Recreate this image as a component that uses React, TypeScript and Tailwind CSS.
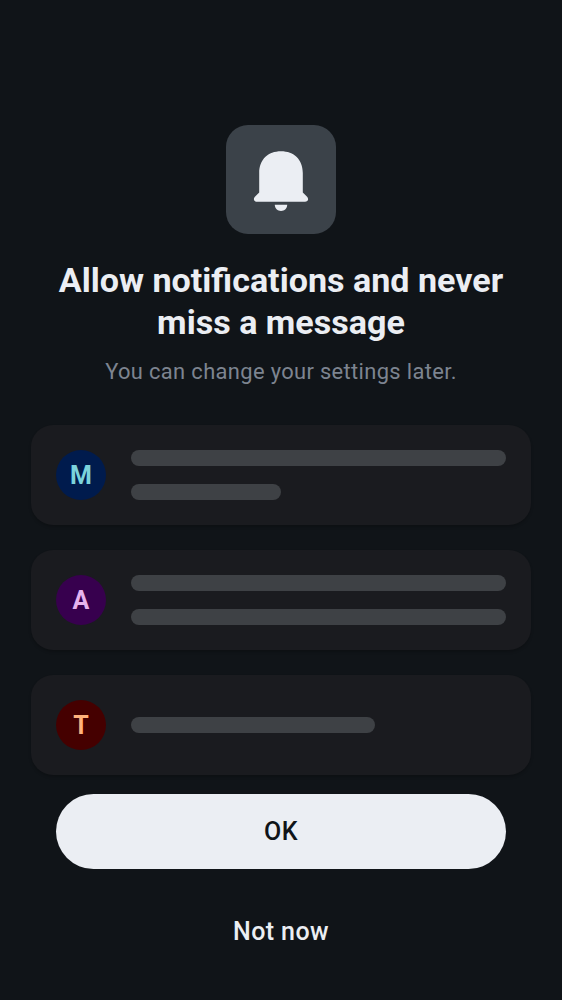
type Preview = {
  letter: string;
  avatar: string;
  lines: string[];
};

const previews: Preview[] = [
  { letter: "M", avatar: "bg-[#001b4d] text-[#7cd3dc]", lines: ["w-full", "w-[150px]"] },
  { letter: "A", avatar: "bg-[#37004e] text-[#e6b3ed]", lines: ["w-full", "w-full"] },
  { letter: "T", avatar: "bg-[#450000] text-[#ffb27c]", lines: ["w-[244px]"] },
];

function BellIcon() {
  return (
    <svg width="110" height="110" viewBox="0 0 110 110" fill="#ebeef3" aria-hidden="true">
      <path d="M33.2 67.5V48C33.2 34.5 42 26.2 55 26.2S76.8 34.5 76.8 48v19.5l3.8 3.8C83.5 74.2 81.8 76.7 79 76.7H31c-2.8 0-4.5-2.5-1.6-5.4Z" />
      <path d="M48.8 79.8h12.4c0 3.7-2.7 6.2-6.2 6.2s-6.2-2.5-6.2-6.2Z" />
    </svg>
  );
}

function PreviewCard({ letter, avatar, lines }: Preview) {
  return (
    <div className="flex h-[100px] items-center gap-[25px] rounded-[22px] bg-[#1a1b1f] px-[25px] shadow-[0_2px_3px_rgba(0,0,0,0.2)]">
      <div className={`flex size-[50px] shrink-0 items-center justify-center rounded-full pt-0.5 text-[25px] font-bold ${avatar}`}>
        {letter}
      </div>
      <div className="flex grow flex-col gap-[18px]">
        {lines.map((width, i) => (
          <div key={i} className={`h-4 rounded-full bg-[#3e4145] ${width}`} />
        ))}
      </div>
    </div>
  );
}

export default function App() {
  return (
    <main className="flex h-[1000px] w-[562px] flex-col bg-[#101418] px-[31px] pt-[125px] font-['Roboto',sans-serif] text-[#ebeef3]">
      <div className="h-[109.4px] w-[109.4px] self-center rounded-[22px] bg-[#3b4249]">
        <BellIcon />
      </div>
      <h1 className="mt-[24.6px] text-center text-[34.1px] leading-[42px] font-bold">
        Allow notifications and never
        <br />
        miss a message
      </h1>
      <p className="mt-[13px] text-center text-[21.9px] leading-[31px] tracking-[0.35px] text-[#7d8490]">
        You can change your settings later.
      </p>
      <section className="mt-[38px] flex flex-col gap-[25px]">
        {previews.map((preview) => (
          <PreviewCard key={preview.letter} {...preview} />
        ))}
      </section>
      <div className="mt-[19px] flex flex-col gap-[25px] px-[25px] text-[25px] font-medium tracking-[0.4px]">
        <button className="h-[75px] rounded-full bg-[#ebeef3] text-[#101418]">OK</button>
        <button className="h-[75px] rounded-full">Not now</button>
      </div>
    </main>
  );
}
